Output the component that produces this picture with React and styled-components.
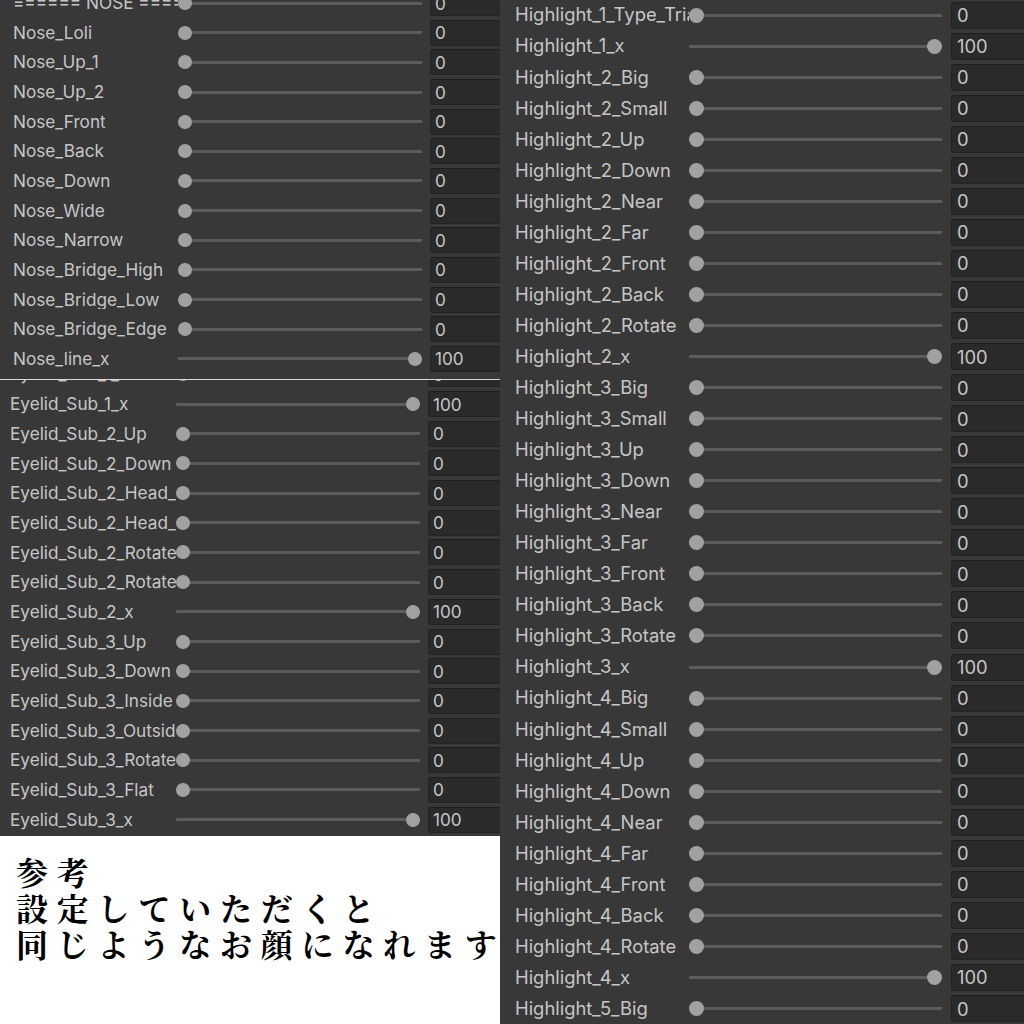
import React from "react";
import styled, { createGlobalStyle } from "styled-components";

const Global = createGlobalStyle`
  html, body { margin: 0; padding: 0; background: #ffffff; }
  body { width: 1024px; height: 1024px; overflow: hidden; }
  * { box-sizing: border-box; }
`;

const Page = styled.div`
  display: grid;
  grid-template-columns: 500px 524px;
  width: 1024px;
  height: 1024px;
  overflow: hidden;
  font-family: Inter, "Noto Sans", sans-serif;
`;

const LeftColumn = styled.div`
  display: flex;
  flex-direction: column;
  height: 1024px;
  overflow: hidden;
`;

const Inspector = styled.div`
  background: #383838;
  height: ${(p) => p.$height}px;
  overflow: hidden;
  flex: none;
`;

const Divider = styled.div`
  height: 1px;
  background: #d8d8d8;
  flex: none;
`;

const RowList = styled.div`
  display: flex;
  flex-direction: column;
  margin-top: ${(p) => p.$offset}px;
  padding-left: ${(p) => p.$pad}px;
`;

const Row = styled.div`
  display: grid;
  grid-template-columns: ${(p) => `${p.$g.label}px ${p.$g.track}px ${p.$g.gap}px 120px`};
  align-items: center;
  height: ${(p) => p.$g.rowH}px;
  flex: none;
`;

const Label = styled.div`
  color: #c6c6c6;
  font-size: ${(p) => p.$size}px;
  white-space: nowrap;
  overflow: hidden;
  line-height: 1.15;
`;

const Slider = styled.div`
  position: relative;
  height: ${(p) => p.$knob}px;
  &::before {
    content: "";
    position: absolute;
    left: 0;
    right: 0;
    top: 50%;
    height: 3px;
    margin-top: -1.5px;
    background: #5c5c5c;
    border-radius: 1px;
  }
`;

const Knob = styled.div`
  position: absolute;
  top: 0;
  width: ${(p) => p.$knob}px;
  height: ${(p) => p.$knob}px;
  border-radius: 50%;
  background: #a1a1a1;
`;

const Field = styled.div`
  grid-column: 4;
  height: ${(p) => p.$h}px;
  background: #2a2a2a;
  border: 1px solid #232323;
  border-top-color: #1e1e1e;
  border-radius: 3px;
  color: #c6c6c6;
  font-size: ${(p) => p.$size}px;
  display: flex;
  align-items: center;
  padding-left: ${(p) => p.$padL}px;
`;

const Note = styled.div`
  flex: 1;
  background: #ffffff;
  padding: 17px 0 0 16px;
  font-family: "Noto Serif CJK JP", "Noto Sans CJK JP", serif;
  font-size: 32px;
  font-weight: 700;
  letter-spacing: 8.8px;
  line-height: 36px;
  color: #000000;
  white-space: nowrap;
`;

const RightColumn = styled.div`
  background: #383838;
  height: 1024px;
  overflow: hidden;
`;

const noseGeo = { rowH: 29.67, label: 165, track: 244, gap: 8, knob: 14, font: 17.2, fieldH: 26, padL: 4 };
const eyelidGeo = { rowH: 29.7, label: 166, track: 244, gap: 8, knob: 14, font: 17.2, fieldH: 26, padL: 4 };
const highlightGeo = { rowH: 31.06, label: 174, track: 253, gap: 9, knob: 15, font: 18.4, fieldH: 27, padL: 5 };

const nose = [
  ["====== NOSE ======", 0],
  ["Nose_Loli", 0],
  ["Nose_Up_1", 0],
  ["Nose_Up_2", 0],
  ["Nose_Front", 0],
  ["Nose_Back", 0],
  ["Nose_Down", 0],
  ["Nose_Wide", 0],
  ["Nose_Narrow", 0],
  ["Nose_Bridge_High", 0],
  ["Nose_Bridge_Low", 0],
  ["Nose_Bridge_Edge", 0],
  ["Nose_line_x", 100],
];

const eyelid = [
  ["Eyelid_Sub_1_Outside", 0],
  ["Eyelid_Sub_1_x", 100],
  ["Eyelid_Sub_2_Up", 0],
  ["Eyelid_Sub_2_Down", 0],
  ["Eyelid_Sub_2_Head_Up", 0],
  ["Eyelid_Sub_2_Head_Down", 0],
  ["Eyelid_Sub_2_Rotate_1", 0],
  ["Eyelid_Sub_2_Rotate_2", 0],
  ["Eyelid_Sub_2_x", 100],
  ["Eyelid_Sub_3_Up", 0],
  ["Eyelid_Sub_3_Down", 0],
  ["Eyelid_Sub_3_Inside", 0],
  ["Eyelid_Sub_3_Outside", 0],
  ["Eyelid_Sub_3_Rotate", 0],
  ["Eyelid_Sub_3_Flat", 0],
  ["Eyelid_Sub_3_x", 100],
];

const parts = ["Big", "Small", "Up", "Down", "Near", "Far", "Front", "Back", "Rotate"];
const highlight = [
  ["Highlight_1_Type_Triangle", 0],
  ["Highlight_1_x", 100],
  ...[2, 3, 4].flatMap((n) => [
    ...parts.map((p) => [`Highlight_${n}_${p}`, 0]),
    [`Highlight_${n}_x`, 100],
  ]),
  ["Highlight_5_Big", 0],
];

function PropertyRow({ name, value, g }) {
  const left = (value / 100) * (g.track - g.knob);
  return (
    <Row $g={g}>
      <Label $size={g.font}>{name}</Label>
      <Slider $knob={g.knob}>
        <Knob $knob={g.knob} style={{ left }} />
      </Slider>
      <Field $h={g.fieldH} $size={g.font} $padL={g.padL}>
        {value}
      </Field>
    </Row>
  );
}

function PropertyList({ rows, g, offset, pad }) {
  return (
    <RowList $offset={offset} $pad={pad}>
      {rows.map(([name, value], i) => (
        <PropertyRow key={i} name={name} value={value} g={g} />
      ))}
    </RowList>
  );
}

export default function App() {
  return (
    <>
      <Global />
      <Page>
        <LeftColumn>
          <Inspector $height={379}>
            <PropertyList rows={nose} g={noseGeo} offset={-11.8} pad={13} />
          </Inspector>
          <Divider />
          <Inspector $height={456}>
            <PropertyList rows={eyelid} g={eyelidGeo} offset={-20.5} pad={10} />
          </Inspector>
          <Note>
            参考
            <br />
            設定していただくと
            <br />
            同じようなお顔になれます
          </Note>
        </LeftColumn>
        <RightColumn>
          <PropertyList rows={highlight} g={highlightGeo} offset={-0.5} pad={15} />
        </RightColumn>
      </Page>
    </>
  );
}
